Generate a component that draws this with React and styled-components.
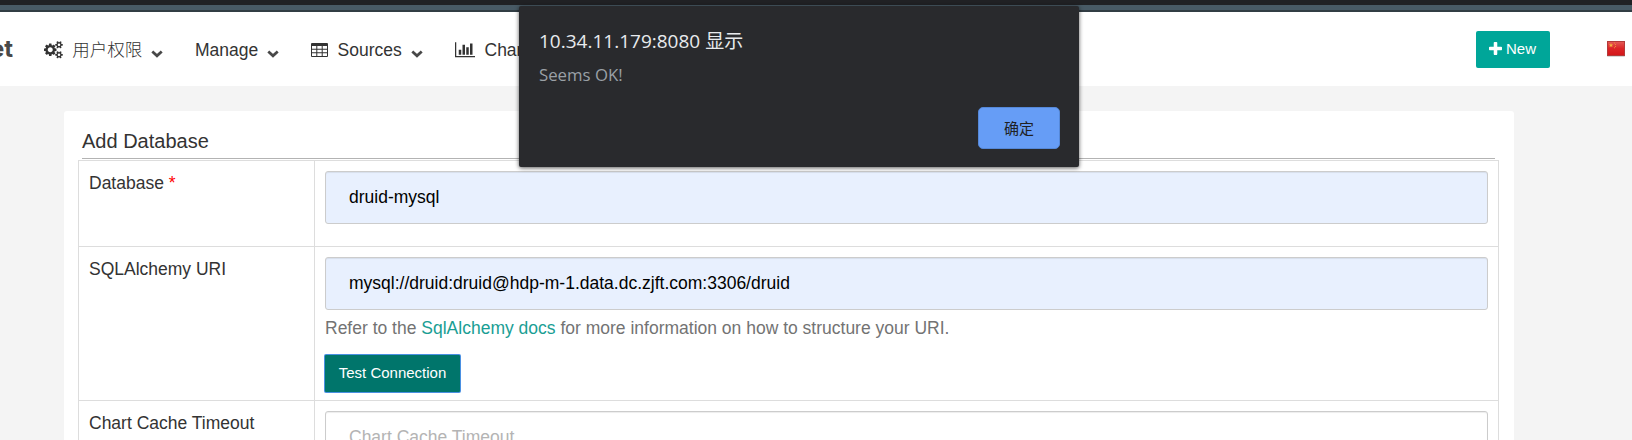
import React from 'react';
import styled, { createGlobalStyle } from 'styled-components';

const GlobalStyle = createGlobalStyle`
  *, *::before, *::after { box-sizing: border-box; }
  body {
    margin: 0;
    background: #f4f4f4;
    color: #333;
    font: 17.5px/25px "Liberation Sans", "Noto Sans CJK SC", sans-serif;
    overflow: hidden;
  }
`;

const Page = styled.div`
  height: 440px;
  overflow: hidden;
`;

const BrowserEdge = styled.div`
  height: 12px;
  background: #485a65;
  border-top: 5px solid #202124;
  border-bottom: 2px solid #313d44;
`;

const Navbar = styled.header`
  display: flex;
  align-items: center;
  height: 74px;
  padding-right: 7px;
  background: #fff;
`;

const Brand = styled.div`
  display: flex;
  justify-content: flex-end;
  width: 13px;
  margin-right: 31px;
  padding-bottom: 2px;
  overflow: hidden;
  font-family: Inter, "Liberation Sans", sans-serif;
  font-size: 24px;
  font-weight: bold;
  color: #484848;
`;

const NavItem = styled.div`
  display: flex;
  align-items: center;
  width: ${(p) => p.$width}px;
  padding-top: 2px;
  flex: none;
  white-space: nowrap;
  font-weight: 300;

  > svg:first-child { margin-right: 9.5px; flex: none; }
`;

const CaretIcon = styled.svg`
  margin: 8px 0 0 9px;
  flex: none;
`;

const NewButton = styled.button`
  display: flex;
  align-items: center;
  gap: 4px;
  width: 74px;
  height: 37px;
  margin: 0 57px 0 auto;
  padding: 0 0 2px 13px;
  border: 0;
  border-radius: 2px;
  background: #00a699;
  color: #fff;
  font: 15px "Liberation Sans", sans-serif;
`;

const Card = styled.main`
  width: 1450px;
  margin: 25px 0 0 64px;
  padding: 11px 15px 0 14px;
  border-radius: 3px;
  background: #fff;
`;

const Title = styled.h4`
  width: 1413px;
  height: 37px;
  margin: 0 0 1px 4px;
  border-bottom: 1px solid #b3b3b3;
  font-size: 20px;
  font-weight: normal;
  line-height: 38px;
`;

const FormTable = styled.div`
  border: 1px solid #ddd;
  border-bottom: 0;
`;

const Row = styled.div`
  display: flex;
  height: ${(p) => p.$height}px;
  border-bottom: 1px solid #ddd;
`;

const Label = styled.div`
  width: 236px;
  padding: 10px;
  border-right: 1px solid #ddd;
`;

const Required = styled.span`
  color: #f00;
`;

const Field = styled.div`
  flex: 1;
  padding: 10px;
`;

const Input = styled.input`
  display: block;
  width: 100%;
  height: 53px;
  padding: 0 23px;
  border: 1px solid #ccc;
  border-radius: 3px;
  outline: 0;
  background: ${(p) => (p.$filled ? '#e8f0fe' : '#fff')};
  box-shadow: inset 0 1px 1px rgba(0, 0, 0, 0.075);
  color: #000;
  font: 17.5px "Liberation Sans", sans-serif;

  &::placeholder { color: #b4b4b4; }
`;

const Help = styled.p`
  margin: 6px 0 14px;
  color: #737373;
`;

const DocLink = styled.a`
  color: #1a9e94;
`;

const TestButton = styled.button`
  display: block;
  width: 135px;
  height: 37px;
  padding: 0 0 3px;
  border: 0;
  border-radius: 1px;
  background: #00756b;
  box-shadow: 0 0 0 1px #4a90e2;
  color: #fff;
  font: 15px "Liberation Sans", sans-serif;
`;

const Dialog = styled.section`
  position: absolute;
  top: 6px;
  left: 519px;
  display: flex;
  flex-direction: column;
  width: 560px;
  height: 161px;
  padding: 22px 19px 18px 20px;
  border-radius: 2px;
  background: #292a2d;
  box-shadow: 0 1px 4px rgba(0, 0, 0, 0.65);
  font-family: "Open Sans", "Noto Sans CJK SC", sans-serif;
`;

const DialogTitle = styled.div`
  height: 26px;
  color: #e8eaed;
  font-size: 19px;
  line-height: 26px;
`;

const DialogMessage = styled.div`
  margin-top: 9px;
  color: #9aa0a6;
  font-size: 16.8px;
  line-height: 24px;
`;

const ConfirmButton = styled.button`
  width: 82px;
  height: 42px;
  margin: auto 0 0 auto;
  padding: 0 0 1px;
  border: 1px solid #5588d8;
  border-radius: 5px;
  background: #669df6;
  color: #202124;
  font: 15px "Noto Sans CJK SC", sans-serif;
`;

const Caret = () => (
  <CaretIcon width="12" height="8" viewBox="0 0 12 8">
    <path d="M1.3 1.5 6 5.8 10.7 1.5" fill="none" stroke="#484848" strokeWidth="2.8" />
  </CaretIcon>
);

const CogsIcon = () => (
  <svg width="18.75" height="17.5" viewBox="0 0 1920 1792" fill="#333">
    <path d="M896 896q0-106-75-181t-181-75-181 75-75 181 75 181 181 75 181-75 75-181zm768 512q0-52-38-90t-90-38-90 38-38 90q0 53 37.5 90.5t90.5 37.5 90.5-37.5 37.5-90.5zm0-1024q0-52-38-90t-90-38-90 38-38 90q0 53 37.5 90.5t90.5 37.5 90.5-37.5 37.5-90.5zm-384 421v185q0 10-7 19.5t-16 10.5l-155 24q-11 35-32 76 34 48 90 115 7 11 7 20 0 12-7 19-23 30-82.5 89.5t-78.5 59.5q-11 0-21-7l-115-90q-37 19-77 31-11 108-23 155-7 24-30 24h-186q-11 0-20-7.5t-10-17.5l-23-153q-34-10-75-31l-118 89q-7 7-20 7-11 0-21-8-144-133-144-160 0-9 7-19 10-14 41-53t47-61q-23-44-35-82l-152-24q-10-1-17-9.5t-7-19.5v-185q0-10 7-19.5t16-10.5l155-24q11-35 32-76-34-48-90-115-7-11-7-20 0-12 7-20 22-30 82-89t79-59q11 0 21 7l115 90q34-18 77-32 11-108 23-154 7-24 30-24h186q11 0 20 7.5t10 17.5l23 153q34 10 75 31l118-89q8-7 20-7 11 0 21 8 144 133 144 160 0 8-7 19-12 16-42 54t-45 60q23 48 34 82l152 23q10 2 17 10.5t7 19.5zm640 533v140q0 16-149 31-12 27-30 52 51 113 51 138 0 4-4 7-122 71-124 71-8 0-46-47t-52-68q-20 2-30 2t-30-2q-14 21-52 68t-46 47q-2 0-124-71-4-3-4-7 0-25 51-138-18-25-30-52-149-15-149-31v-140q0-16 149-31 13-29 30-52-51-113-51-138 0-4 4-7 4-2 35-20t59-34 30-16q8 0 46 46.5t52 67.5q20-2 30-2t30 2q51-71 92-112l6-2q4 0 124 70 4 3 4 7 0 25-51 138 17 23 30 52 149 15 149 31zm0-1024v140q0 16-149 31-12 27-30 52 51 113 51 138 0 4-4 7-122 71-124 71-8 0-46-47t-52-68q-20 2-30 2t-30-2q-14 21-52 68t-46 47q-2 0-124-71-4-3-4-7 0-25 51-138-18-25-30-52-149-15-149-31v-140q0-16 149-31 13-29 30-52-51-113-51-138 0-4 4-7 4-2 35-20t59-34 30-16q8 0 46 46.5t52 67.5q20-2 30-2t30 2q51-71 92-112l6-2q4 0 124 70 4 3 4 7 0 25-51 138 17 23 30 52 149 15 149 31z" />
  </svg>
);

const TableIcon = () => (
  <svg width="17" height="16" viewBox="0 0 17 16">
    <path d="M1 1h15a1 1 0 0 1 1 1v12a1 1 0 0 1-1 1H1a1 1 0 0 1-1-1V2a1 1 0 0 1 1-1zM1 4v2.7h4.3V4zm5.3 0v2.7h4.4V4zm5.4 0v2.7H16V4zM1 7.7v2.6h4.3V7.7zm5.3 0v2.6h4.4V7.7zm5.4 0v2.6H16V7.7zM1 11.3V14h4.3v-2.7zm5.3 0V14h4.4v-2.7zm5.4 0V14H16v-2.7z" fill="#333" fillRule="evenodd" />
  </svg>
);

const ChartIcon = () => (
  <svg width="20" height="17.5" viewBox="0 0 2048 1792" fill="#333">
    <path d="M640 896v512h-256v-512h256zm384-512v1024h-256v-1024h256zm1024 1152v128h-2048v-1536h128v1408h1920zm-640-896v768h-256v-768h256zm384-384v1152h-256v-1152h256z" />
  </svg>
);

const PlusIcon = () => (
  <svg width="13" height="13" viewBox="192 0 1408 1408" fill="#fff">
    <path d="M1600 608v192q0 40-28 68t-68 28h-416v416q0 40-28 68t-68 28h-192q-40 0-68-28t-28-68v-416h-416q-40 0-68-28t-28-68v-192q0-40 28-68t68-28h416v-416q0-40 28-68t68-28h192q40 0 68 28t28 68v416h416q40 0 68 28t28 68z" />
  </svg>
);

const FlagIcon = () => (
  <svg width="18" height="16" viewBox="0 0 18 16">
    <defs>
      <linearGradient id="flagRed" x2="0" y2="1">
        <stop offset="0" stopColor="#e35b57" />
        <stop offset=".5" stopColor="#dc2527" />
        <stop offset="1" stopColor="#d31519" />
      </linearGradient>
    </defs>
    <rect y="1" width="18" height="15" rx="1" fill="#bbb" opacity=".6" />
    <rect x=".5" y=".5" width="17" height="14" fill="url(#flagRed)" stroke="#b33a39" />
    <path d="m4 2 .6 1.4 1.6.1-1.2 1 .4 1.5L4 5.2 2.6 6 3 4.5 1.8 3.5l1.600-.1z" fill="#f6b440" />
    <path d="M7 1.500h1v1H7zM8 3h1v1H8zM8 5h1v1H8zM7 6.300h1v1H7z" fill="#ee8b3c" />
  </svg>
);

export default function App() {
  return (
    <Page>
      <GlobalStyle />
      <BrowserEdge />
      <Navbar>
        <Brand>et</Brand>
        <NavItem $width={151}><CogsIcon />用户权限<Caret /></NavItem>
        <NavItem $width={116}>Manage<Caret /></NavItem>
        <NavItem $width={144}><TableIcon />Sources<Caret /></NavItem>
        <NavItem $width={120}><ChartIcon />Charts<Caret /></NavItem>
        <NewButton><PlusIcon />New</NewButton>
        <FlagIcon />
      </Navbar>
      <Card>
        <Title>Add Database</Title>
        <FormTable>
          <Row $height={86}>
            <Label>Database <Required>*</Required></Label>
            <Field><Input $filled defaultValue="druid-mysql" /></Field>
          </Row>
          <Row $height={154}>
            <Label>SQLAlchemy URI</Label>
            <Field>
              <Input $filled defaultValue="mysql://druid:druid@hdp-m-1.data.dc.zjft.com:3306/druid" />
              <Help>Refer to the <DocLink>SqlAlchemy docs</DocLink> for more information on how to structure your URI.</Help>
              <TestButton>Test Connection</TestButton>
            </Field>
          </Row>
          <Row $height={86}>
            <Label>Chart Cache Timeout</Label>
            <Field><Input placeholder="Chart Cache Timeout" /></Field>
          </Row>
        </FormTable>
      </Card>
      <Dialog role="alertdialog">
        <DialogTitle>10.34.11.179:8080 显示</DialogTitle>
        <DialogMessage>Seems OK!</DialogMessage>
        <ConfirmButton>确定</ConfirmButton>
      </Dialog>
    </Page>
  );
}
